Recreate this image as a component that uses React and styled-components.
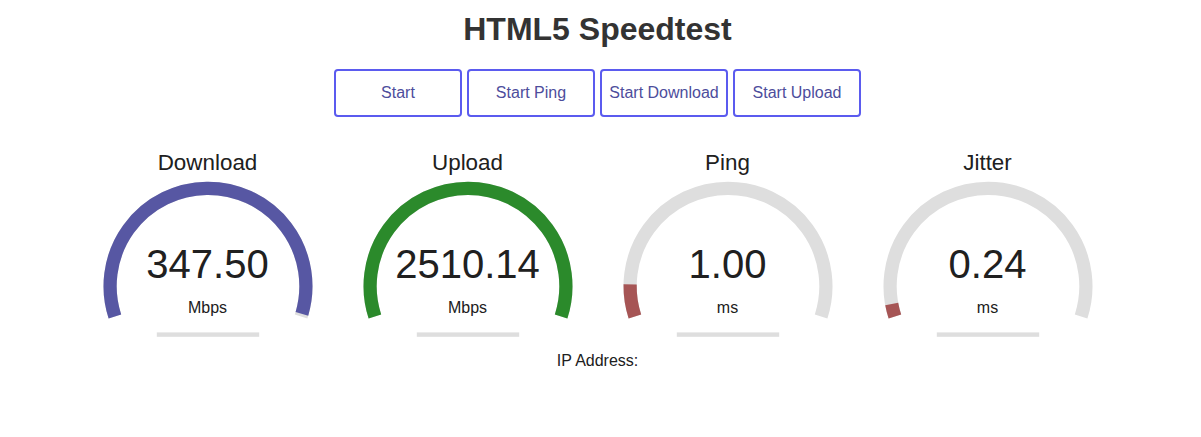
import React from "react";
import styled, { createGlobalStyle } from "styled-components";

const Global = createGlobalStyle`
  html, body { margin: 0; padding: 0; background: #ffffff; }
  body {
    font-family: "Liberation Sans", Arial, Helvetica, sans-serif;
    color: #202020;
  }
`;

const Page = styled.div`
  display: flex;
  flex-direction: column;
  align-items: center;
  padding-right: 6px;
  text-align: center;
`;

const Title = styled.h1`
  margin: 11px 0 0;
  font-size: 32px;
  line-height: 37px;
  font-weight: 700;
  color: #333333;
`;

const ButtonRow = styled.div`
  display: flex;
  gap: 5px;
  margin-top: 21px;
`;

const Button = styled.button`
  width: 128px;
  height: 48px;
  box-sizing: border-box;
  border: 2px solid #5b5bef;
  border-radius: 4px;
  background: #ffffff;
  color: #4d4d9c;
  font-family: "Liberation Sans", Arial, sans-serif;
  font-size: 16px;
  padding: 0;
  cursor: pointer;
`;

const GaugeRow = styled.div`
  display: flex;
  gap: 4px;
  margin-top: 33px;
`;

const TestArea = styled.div`
  position: relative;
  width: 256px;
  height: 200px;
`;

const Canvas = styled.svg`
  position: absolute;
  top: 0;
  left: 0;
  width: 100%;
  height: 100%;
`;

const TestName = styled.div`
  position: absolute;
  top: 0;
  left: 0;
  width: 100%;
  font-size: 22.4px;
  line-height: 26px;
  color: #202020;
`;

const MeterText = styled.div`
  position: absolute;
  bottom: 63px;
  left: 0;
  width: 100%;
  font-size: 40px;
  line-height: 46px;
  color: #202020;
`;

const Unit = styled.div`
  position: absolute;
  bottom: 33px;
  left: 0;
  width: 100%;
  font-size: 16px;
  line-height: 18px;
  color: #202020;
`;

const IpLine = styled.div`
  margin-top: 2px;
  font-size: 16px;
  line-height: 18px;
  color: #202020;
`;

const CX = 128;
const CY = 136.2;
const R = 97.9;
const LW = 13.2;
const START = (162 * Math.PI) / 180;
const SWEEP = 1.2 * Math.PI;

function arcPath(amount) {
  const end = START + SWEEP * amount;
  const x1 = CX + R * Math.cos(START);
  const y1 = CY + R * Math.sin(START);
  const x2 = CX + R * Math.cos(end);
  const y2 = CY + R * Math.sin(end);
  const large = SWEEP * amount > Math.PI ? 1 : 0;
  return `M ${x1} ${y1} A ${R} ${R} 0 ${large} 1 ${x2} ${y2}`;
}

function Gauge({ name, value, unit, amount, color }) {
  return (
    <TestArea>
      <Canvas viewBox="0 0 256 200">
        <path d={arcPath(1)} fill="none" stroke="#dedede" strokeWidth={LW} />
        <path d={arcPath(amount)} fill="none" stroke={color} strokeWidth={LW} />
        <rect x="76.8" y="182.4" width="102.4" height="4.4" fill="#dedede" />
      </Canvas>
      <TestName>{name}</TestName>
      <MeterText>{value}</MeterText>
      <Unit>{unit}</Unit>
    </TestArea>
  );
}

const gauges = [
  { name: "Download", value: "347.50", unit: "Mbps", amount: 0.9925, color: "#5757a3" },
  { name: "Upload", value: "2510.14", unit: "Mbps", amount: 1, color: "#2b8a2b" },
  { name: "Ping", value: "1.00", unit: "ms", amount: 0.088, color: "#a65555" },
  { name: "Jitter", value: "0.24", unit: "ms", amount: 0.035, color: "#a65555" },
];

export default function App() {
  return (
    <>
      <Global />
      <Page>
        <Title>HTML5 Speedtest</Title>
        <ButtonRow>
          <Button>Start</Button>
          <Button>Start Ping</Button>
          <Button>Start Download</Button>
          <Button>Start Upload</Button>
        </ButtonRow>
        <GaugeRow>
          {gauges.map((g) => (
            <Gauge key={g.name} {...g} />
          ))}
        </GaugeRow>
        <IpLine>IP Address:</IpLine>
      </Page>
    </>
  );
}
